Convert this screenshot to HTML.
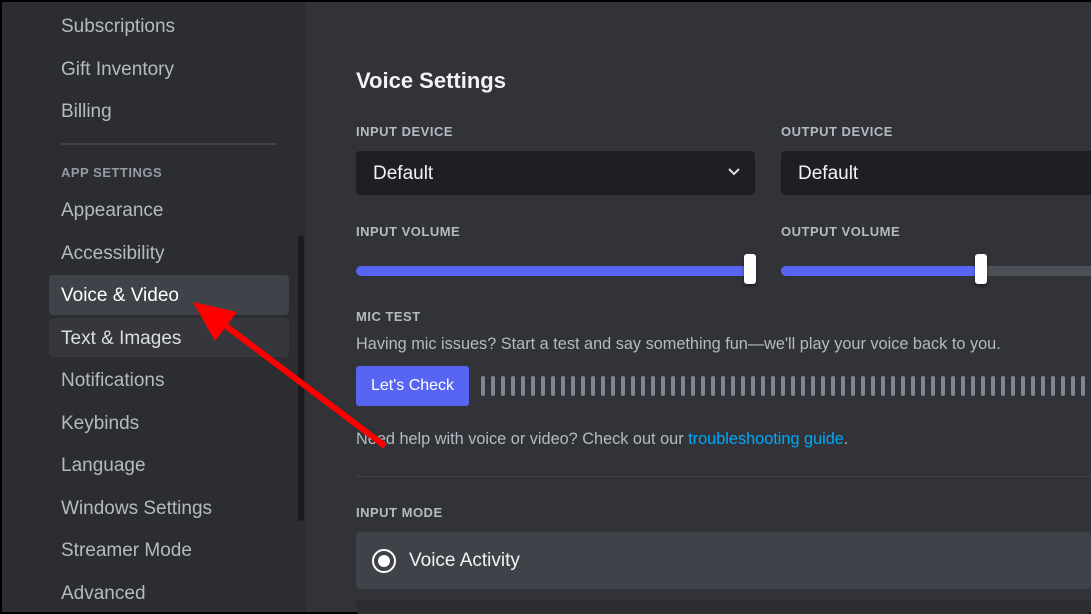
<!DOCTYPE html>
<html><head><meta charset="utf-8"><style>
*{margin:0;padding:0;box-sizing:border-box}
body{width:1091px;height:614px;overflow:hidden;background:#000;font-family:"Liberation Sans",sans-serif;position:relative}
.sb{position:absolute;left:2px;top:2px;width:304px;height:610px;background:#2b2d31}
.main{position:absolute;left:306px;top:2px;width:785px;height:610px;background:#313338}
.it{position:absolute;left:61px;font-size:19px;color:#b5bac1;line-height:22px;margin-top:2px}
.a{position:absolute}
.lbl{position:absolute;font-size:13px;font-weight:bold;color:#b5bac1;letter-spacing:.5px}
.dd{position:absolute;height:44px;background:#1e1f22;border-radius:4px;color:#f2f3f5;font-size:19px;padding:12px 17px}
.t{font-size:16.3px;color:#b5bac1;position:absolute;margin-top:1px}
.bar{position:absolute;top:376px;width:4px;height:20px;background:#80848e;border-radius:2px}
</style></head><body>
<div class="sb"></div>
<div class="main"></div>
<div class="it" style="top:14px">Subscriptions</div>
<div class="it" style="top:57px">Gift Inventory</div>
<div class="it" style="top:99px">Billing</div>
<div class="a" style="left:61px;top:143px;width:215px;height:2px;background:#3f4147"></div>
<div class="lbl" style="left:61px;top:165px;color:#949ba4">APP SETTINGS</div>
<div class="it" style="top:198px">Appearance</div>
<div class="it" style="top:241px">Accessibility</div>
<div class="a" style="left:49px;top:275px;width:240px;height:40px;background:#3f4248;border-radius:4px"></div>
<div class="it" style="top:283px;color:#fff">Voice &amp; Video</div>
<div class="a" style="left:49px;top:318px;width:240px;height:39px;background:#35373c;border-radius:4px"></div>
<div class="it" style="top:326px;color:#dbdee1">Text &amp; Images</div>
<div class="it" style="top:368px">Notifications</div>
<div class="it" style="top:411px">Keybinds</div>
<div class="it" style="top:453px">Language</div>
<div class="it" style="top:496px">Windows Settings</div>
<div class="it" style="top:538px">Streamer Mode</div>
<div class="it" style="top:581px">Advanced</div>
<div class="a" style="left:298px;top:235px;width:6px;height:286px;background:#1a1b1e;border-radius:3px"></div>

<div class="a" style="left:356px;top:68px;font-size:22px;font-weight:bold;color:#f2f3f5">Voice Settings</div>
<div class="lbl" style="left:356px;top:124px">INPUT DEVICE</div>
<div class="lbl" style="left:781px;top:124px">OUTPUT DEVICE</div>
<div class="dd" style="left:356px;top:151px;width:399px">Default
<svg style="position:absolute;right:14px;top:16px" width="14" height="10" viewBox="0 0 14 10"><path d="M2 2l5 5 5-5" stroke="#dbdee1" stroke-width="2" fill="none"/></svg></div>
<div class="dd" style="left:781px;top:151px;width:320px">Default</div>
<div class="lbl" style="left:356px;top:224px">INPUT VOLUME</div>
<div class="lbl" style="left:781px;top:224px">OUTPUT VOLUME</div>
<div class="a" style="left:356px;top:266px;width:394px;height:10px;background:#5865f2;border-radius:5px"></div>
<div class="a" style="left:744px;top:254px;width:12px;height:30px;background:#fff;border-radius:3px;box-shadow:0 2px 3px rgba(0,0,0,.4)"></div>
<div class="a" style="left:781px;top:266px;width:320px;height:10px;background:#4e5058;border-radius:5px"></div>
<div class="a" style="left:781px;top:266px;width:200px;height:10px;background:#5865f2;border-radius:5px"></div>
<div class="a" style="left:975px;top:254px;width:12px;height:30px;background:#fff;border-radius:3px;box-shadow:0 2px 3px rgba(0,0,0,.4)"></div>
<div class="lbl" style="left:356px;top:309px">MIC TEST</div>
<div class="t" style="left:356px;top:334px">Having mic issues? Start a test and say something fun—we'll play your voice back to you.</div>
<div class="a" style="left:356px;top:366px;width:113px;height:40px;background:#5865f2;border-radius:3px;color:#fff;font-size:16px;text-align:center;line-height:40px">Let's Check</div>
<div id="bars"></div>
<script>
var h='';for(var x=481;x<1091;x+=10)h+='<div class="bar" style="left:'+x+'px"></div>';document.getElementById('bars').innerHTML=h;
</script>
<div class="t" style="left:356px;top:429px">Need help with voice or video? Check out our <span style="color:#00a8fc">troubleshooting guide</span>.</div>
<div class="a" style="left:356px;top:476px;width:735px;height:1px;background:#3f4147"></div>
<div class="lbl" style="left:356px;top:505px">INPUT MODE</div>
<div class="a" style="left:356px;top:532px;width:735px;height:57px;background:#404249;border-radius:4px"></div>
<div class="a" style="left:372px;top:549px;width:24px;height:24px;border:2px solid #fff;border-radius:50%"></div>
<div class="a" style="left:378px;top:555px;width:12px;height:12px;background:#fff;border-radius:50%"></div>
<div class="a" style="left:409px;top:550px;font-size:19px;color:#f2f3f5">Voice Activity</div>
<div class="a" style="left:356px;top:600px;width:735px;height:14px;background:#2b2d31;border-radius:4px"></div>
<svg class="a" style="left:0;top:0" width="1091" height="614"><line x1="385" y1="446" x2="222" y2="323" stroke="#f00" stroke-width="6"/><polygon points="193,302 237,312 215,341" fill="#f00"/></svg>
</body></html>
